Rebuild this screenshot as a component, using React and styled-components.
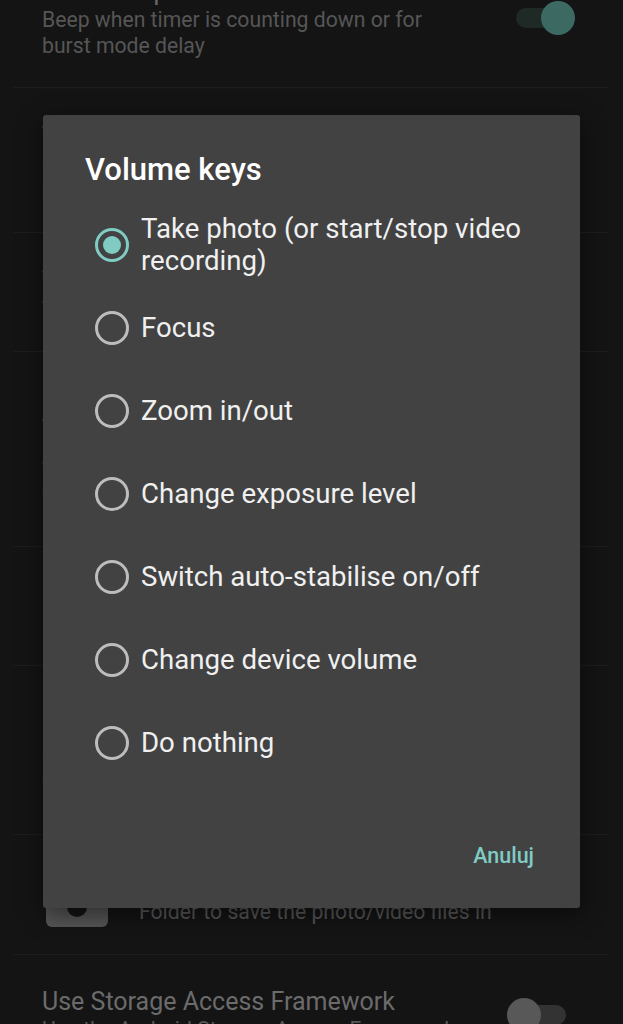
import styled, { createGlobalStyle } from "styled-components";

const GlobalStyle = createGlobalStyle`
  html, body {
    margin: 0;
    padding: 0;
    background: #141414;
  }
  body {
    font-family: Roboto, "Noto Sans", "Liberation Sans", sans-serif;
    -webkit-font-smoothing: antialiased;
  }
`;

const Page = styled.div`
  position: relative;
  width: 623px;
  height: 1024px;
  overflow: hidden;
  background: #141414;
`;

const SettingsList = styled.div`
  display: flex;
  flex-direction: column;
  margin-top: -57px;
`;

const PrefItem = styled.div`
  display: flex;
  align-items: center;
  gap: 40px;
  margin: 0 14px;
  padding: 32px 34px 27px 28px;
  height: ${(p) => (p.$height ? `${p.$height}px` : "auto")};
  box-sizing: border-box;
  overflow: hidden;
  border-bottom: ${(p) => (p.$last ? "none" : "1px solid #1e1e1e")};
`;

const PrefText = styled.div`
  flex: 1;
  display: flex;
  flex-direction: column;
`;

const PrefTitle = styled.div`
  font-size: 25px;
  line-height: 30px;
  color: #6b6b6b;
`;

const PrefSummary = styled.div`
  font-size: 21.2px;
  line-height: 26px;
  color: #565656;
`;

const IconBox = styled.div`
  width: 62px;
  height: 56px;
  flex-shrink: 0;
  align-self: flex-end;
  margin: 0 -9px -2px 4px;
`;

const Switch = styled.div`
  position: relative;
  width: 68px;
  height: 34px;
  flex-shrink: 0;
`;

const Track = styled.div`
  position: absolute;
  left: 9px;
  right: 9px;
  top: 7px;
  height: 20px;
  border-radius: 10px;
  background: ${(p) => (p.$on ? "#1f2a27" : "#333333")};
`;

const Thumb = styled.div`
  position: absolute;
  top: 0;
  ${(p) => (p.$on ? "right: 0;" : "left: 0;")}
  width: 34px;
  height: 34px;
  border-radius: 50%;
  background: ${(p) => (p.$on ? "#3c6a62" : "#585858")};
`;

const Dialog = styled.div`
  position: absolute;
  top: 115px;
  left: 43px;
  width: 537px;
  box-sizing: border-box;
  padding: 39px 0 29px;
  background: #424242;
  border-radius: 3px;
  box-shadow: 0 6px 24px rgba(0, 0, 0, 0.5);
  display: flex;
  flex-direction: column;
`;

const DialogTitle = styled.div`
  padding-left: 42px;
  font-size: 31px;
  line-height: 32px;
  font-weight: 500;
  color: #ffffff;
`;

const Options = styled.div`
  margin-top: 17px;
  display: flex;
  flex-direction: column;
`;

const OptionRow = styled.div`
  display: flex;
  align-items: center;
  gap: 12px;
  min-height: 83px;
  box-sizing: border-box;
  padding: 8px 30px 8px 52px;
`;

const Radio = styled.div`
  width: 34px;
  height: 34px;
  flex-shrink: 0;
  box-sizing: border-box;
  border-radius: 50%;
  border: 3px solid ${(p) => (p.$checked ? "#80cbc4" : "#bdbdbd")};
  display: flex;
  align-items: center;
  justify-content: center;
`;

const RadioDot = styled.div`
  width: 18px;
  height: 18px;
  border-radius: 50%;
  background: #80cbc4;
`;

const OptionLabel = styled.div`
  flex: 1;
  font-size: 27.6px;
  line-height: 32px;
  color: #f0f0f0;
`;

const Actions = styled.div`
  margin-top: 47px;
  display: flex;
  justify-content: flex-end;
  padding-right: 38px;
`;

const TextButton = styled.button`
  height: 48px;
  padding: 0 8px;
  border: none;
  background: transparent;
  font-family: inherit;
  font-size: 21.5px;
  font-weight: 500;
  color: #80cbc4;
`;

const options = [
  "Take photo (or start/stop video recording)",
  "Focus",
  "Zoom in/out",
  "Change exposure level",
  "Switch auto-stabilise on/off",
  "Change device volume",
  "Do nothing",
];

const FolderIcon = () => (
  <svg width="62" height="56" viewBox="0 0 62 56">
    <rect x="0" y="0" width="62" height="54" rx="6" fill="#555555" />
    <circle cx="31" cy="34" r="10" fill="#141414" />
  </svg>
);

const Toggle = ({ on }) => (
  <Switch>
    <Track $on={on} />
    <Thumb $on={on} />
  </Switch>
);

export default function App() {
  const selected = 0;

  return (
    <Page>
      <GlobalStyle />
      <SettingsList>
        <PrefItem $height={145}>
          <PrefText>
            <PrefTitle>Timer beep</PrefTitle>
            <PrefSummary>
              Beep when timer is counting down or for burst mode delay
            </PrefSummary>
          </PrefText>
          <Toggle on />
        </PrefItem>
        <PrefItem $height={145}>
          <PrefText>
            <PrefTitle>Voice timer countdown</PrefTitle>
            <PrefSummary>
              Give a voice countdown when timer is counting down
            </PrefSummary>
          </PrefText>
          <Toggle />
        </PrefItem>
        <PrefItem $height={119}>
          <PrefText>
            <PrefTitle>Volume keys</PrefTitle>
            <PrefSummary>Take photo</PrefSummary>
          </PrefText>
        </PrefItem>
        <PrefItem $height={195}>
          <PrefText>
            <PrefTitle>Audio control</PrefTitle>
            <PrefSummary>
              If enabled, allow taking a photo (or starting/stopping video
              recording) by making a noise. Note that some devices may not
              support this feature
            </PrefSummary>
          </PrefText>
        </PrefItem>
        <PrefItem $height={119}>
          <PrefText>
            <PrefTitle>Lock orientation</PrefTitle>
            <PrefSummary>Lock the camera orientation</PrefSummary>
          </PrefText>
        </PrefItem>
        <PrefItem $height={169}>
          <PrefText>
            <PrefTitle>Rotate preview</PrefTitle>
            <PrefSummary>
              Option to rotate the preview, e.g. for upside down devices
            </PrefSummary>
          </PrefText>
        </PrefItem>
        <PrefItem $height={120}>
          <IconBox>
            <FolderIcon />
          </IconBox>
          <PrefText>
            <PrefTitle>Save location</PrefTitle>
            <PrefSummary>Folder to save the photo/video files in</PrefSummary>
          </PrefText>
        </PrefItem>
        <PrefItem $last>
          <PrefText>
            <PrefTitle>Use Storage Access Framework</PrefTitle>
            <PrefSummary>Use the Android Storage Access Framework</PrefSummary>
          </PrefText>
          <Toggle />
        </PrefItem>
      </SettingsList>

      <Dialog>
        <DialogTitle>Volume keys</DialogTitle>
        <Options>
          {options.map((label, i) => (
            <OptionRow key={label}>
              <Radio $checked={i === selected}>
                {i === selected && <RadioDot />}
              </Radio>
              <OptionLabel>{label}</OptionLabel>
            </OptionRow>
          ))}
        </Options>
        <Actions>
          <TextButton>Anuluj</TextButton>
        </Actions>
      </Dialog>
    </Page>
  );
}
